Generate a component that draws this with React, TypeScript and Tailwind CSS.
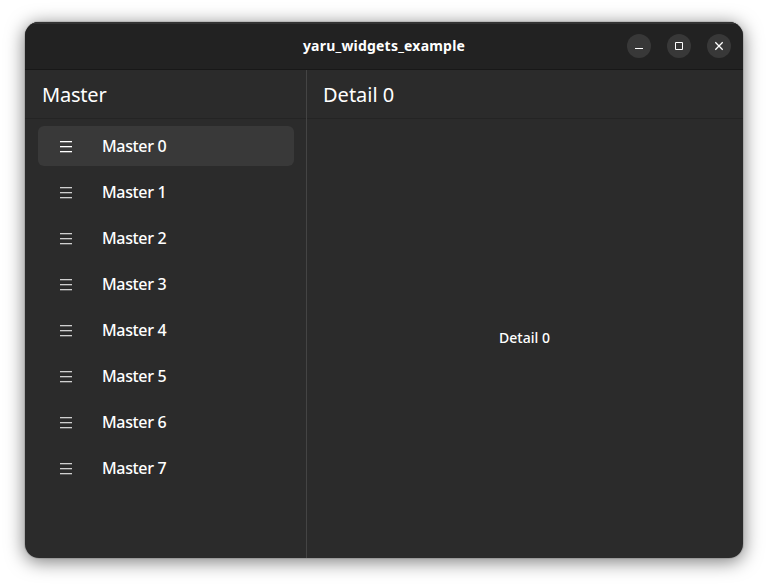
import type { ReactNode } from 'react';

const items = [0, 1, 2, 3, 4, 5, 6, 7];

function MenuIcon({ selected }: { selected: boolean }) {
  return (
    <svg width="12" height="12" viewBox="0 0 12 12" shapeRendering="crispEdges" className={selected ? 'mt-0.5 text-white' : 'mt-0.5 text-[#cfcfcf]'}>
      <path d="M0 0h12v1H0zM0 5h12v1H0zM0 10h12v1H0z" fill="currentColor" />
      <path d="M0 1h12v1H0zM0 6h12v1H0zM0 11h12v1H0z" fill="currentColor" opacity="0.3" />
    </svg>
  );
}

function WindowButton({ label, children }: { label: string; children: ReactNode }) {
  return (
    <button aria-label={label} className="flex size-6 items-center justify-center rounded-full bg-[#383838]">
      <svg width="10" height="10" viewBox="0 0 10 10" fill="none" stroke="#fff">
        {children}
      </svg>
    </button>
  );
}

export default function App() {
  return (
    <div className="h-[586px] w-[768px] overflow-hidden bg-white px-[25px] pt-[22px] font-['Noto_Sans',sans-serif] text-white">
      <div className="flex h-[536px] w-[718px] flex-col overflow-hidden rounded-[14px] bg-[#2b2b2b] shadow-[0_3px_18px_1px_rgba(0,0,0,0.5),0_0_0_1px_rgba(0,0,0,0.1)]">
        <header className="grid h-12 shrink-0 grid-cols-[1fr_auto_1fr] items-center border-t-2 border-b border-t-[#333333] border-b-[#181818] bg-[#222222] pb-[1px]">
          <span />
          <h1 className="text-[14px] leading-5 font-bold tracking-[0.2px]">yaru_widgets_example</h1>
          <div className="flex justify-end gap-4 pr-3">
            <WindowButton label="Minimize"><path d="M1 7.5h8" /></WindowButton>
            <WindowButton label="Maximize"><path d="M1.5 1.5h7v7h-7z" /></WindowButton>
            <WindowButton label="Close"><path d="M1.3 1.3l7.4 7.4M8.7 1.3L1.3 8.7" strokeWidth="1.3" /></WindowButton>
          </div>
        </header>
        <div className="flex min-h-0 flex-1">
          <aside className="flex w-[282px] shrink-0 flex-col border-r border-[#444444]">
            <h2 className="flex h-[49px] items-center border-b border-[#242424] pt-0.5 pl-[17px] text-[20px] tracking-[-0.2px]">Master</h2>
            <nav className="flex flex-col gap-1.5 pt-[7px] pr-3 pl-[13px]">
              {items.map((i) => (
                <div key={i} className={`flex h-10 items-center gap-[30px] rounded-md pl-[22px] ${i === 0 ? 'bg-[#393939]' : ''}`}>
                  <MenuIcon selected={i === 0} />
                  <span className="text-[16px] font-medium tracking-[-0.35px]">Master {i}</span>
                </div>
              ))}
            </nav>
          </aside>
          <main className="flex flex-1 flex-col">
            <h2 className="flex h-[49px] items-center border-b border-[#242424] pt-0.5 pl-4 text-[20px]">Detail 0</h2>
            <div className="flex flex-1 items-center justify-center pr-[1px] pb-0.5 text-[14px] font-medium">Detail 0</div>
          </main>
        </div>
      </div>
    </div>
  );
}
